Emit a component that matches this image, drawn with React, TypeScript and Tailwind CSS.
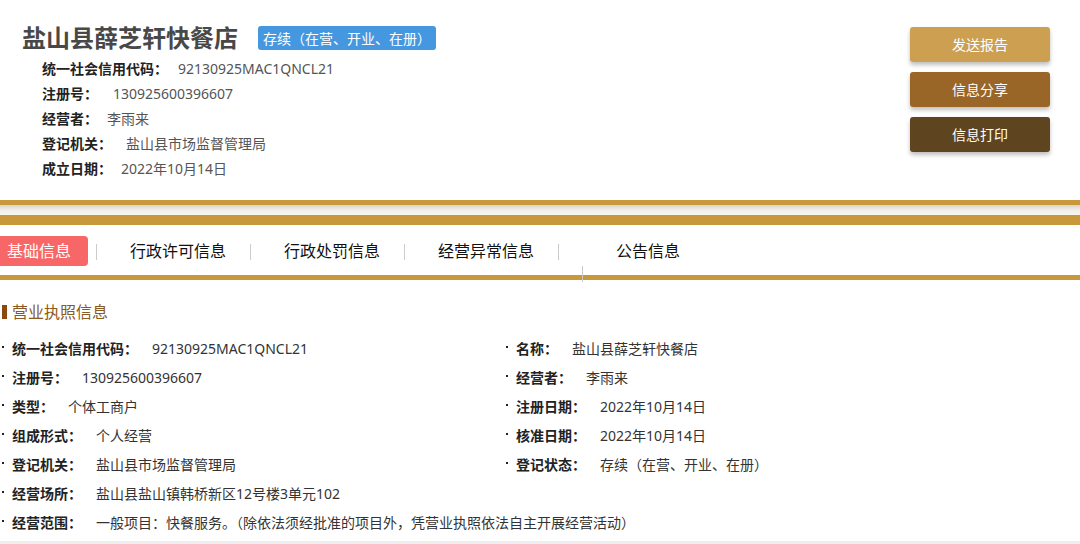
import React from 'react';

const gold = 'bg-[#c9983a]';

const headerInfo: { label: string; value: string; gap: string }[] = [
  { label: '统一社会信用代码：', value: '92130925MAC1QNCL21', gap: 'ml-[10px]' },
  { label: '注册号：', value: '130925600396607', gap: 'ml-[15px]' },
  { label: '经营者：', value: '李雨来', gap: 'ml-[9px]' },
  { label: '登记机关：', value: '盐山县市场监督管理局', gap: 'ml-[14px]' },
  { label: '成立日期：', value: '2022年10月14日', gap: 'ml-[9px]' },
];

type Field = { label: string; value: string };

const rows: { left: Field; right?: Field }[] = [
  { left: { label: '统一社会信用代码：', value: '92130925MAC1QNCL21' }, right: { label: '名称：', value: '盐山县薛芝轩快餐店' } },
  { left: { label: '注册号：', value: '130925600396607' }, right: { label: '经营者：', value: '李雨来' } },
  { left: { label: '类型：', value: '个体工商户' }, right: { label: '注册日期：', value: '2022年10月14日' } },
  { left: { label: '组成形式：', value: '个人经营' }, right: { label: '核准日期：', value: '2022年10月14日' } },
  { left: { label: '登记机关：', value: '盐山县市场监督管理局' }, right: { label: '登记状态：', value: '存续（在营、开业、在册）' } },
  { left: { label: '经营场所：', value: '盐山县盐山镇韩桥新区12号楼3单元102' } },
  { left: { label: '经营范围：', value: '一般项目：快餐服务。（除依法须经批准的项目外，凭营业执照依法自主开展经营活动）' } },
];

const tabs = [
  { name: '行政许可信息', w: 'w-[154px]', pl: 'pl-[33px]' },
  { name: '行政处罚信息', w: 'w-[154px]', pl: 'pl-[33px]' },
  { name: '经营异常信息', w: 'w-[154px]', pl: 'pl-[33px]' },
  { name: '公告信息', w: 'w-[160px]', pl: 'pl-[57px]' },
];

const FieldCell: React.FC<{ field: Field }> = ({ field }) => (
  <div className="flex items-center h-[29px] pl-[2px] whitespace-nowrap">
    <span className="w-[2px] h-[2px] bg-[#222] mb-[4px]" />
    <span className="ml-[8px] font-bold text-[#222]">{field.label}</span>
    <span className="ml-[14px] text-[#333]">{field.value}</span>
  </div>
);

export default function App() {
  return (
    <div className="w-[1080px] h-[544px] overflow-hidden bg-white text-[14px] font-['Noto_Sans','Noto_Sans_CJK_SC',sans-serif]">
      {/* header */}
      <div className="h-[200px] flex justify-between">
        <div className="pl-[22px] pt-[23px]">
          <div className="flex items-center h-[30px]">
            <h1 className="text-[24px] font-bold text-[#484848] leading-none">盐山县薛芝轩快餐店</h1>
            <span className="ml-[20px] h-[24px] px-[5px] flex items-center rounded-[3px] bg-[#4598e0] text-white text-[14px]">
              存续（在营、开业、在册）
            </span>
          </div>
          <div className="mt-[3px] ml-[20px]">
            {headerInfo.map((r) => (
              <div key={r.label} className="h-[25px] flex items-center">
                <span className="font-bold text-[#222]">{r.label}</span>
                <span className={`${r.gap} text-[#555]`}>{r.value}</span>
              </div>
            ))}
          </div>
        </div>
        <div className="pt-[27px] pr-[30px] flex flex-col gap-[10px]">
          <button className="w-[140px] h-[35px] rounded-[3px] bg-[#cc9f51] text-white text-[14px] shadow-[0_3px_4px_rgba(0,0,0,0.25)]">发送报告</button>
          <button className="w-[140px] h-[35px] rounded-[3px] bg-[#9a6628] text-white text-[14px] shadow-[0_3px_4px_rgba(0,0,0,0.25)]">信息分享</button>
          <button className="w-[140px] h-[35px] rounded-[3px] bg-[#5f451f] text-white text-[14px] shadow-[0_3px_4px_rgba(0,0,0,0.25)]">信息打印</button>
        </div>
      </div>

      {/* gold bars */}
      <div className={`h-[5px] ${gold}`} />
      <div className="h-[10px] bg-gradient-to-b from-[#d6d3ca] via-[#f1efe8] to-[#f8f6f1]" />
      <div className={`h-[10px] ${gold}`} />

      {/* tabs */}
      <div className="relative h-[50px] flex items-start text-[16px]">
        <div className="mt-[11px] h-[30px] w-[88px] rounded-r-[4px] bg-[#f76767] text-white flex items-center pl-[7px]">基础信息</div>
        <div className="ml-[8px] flex">
          {tabs.map((t) => (
            <div key={t.name} className={`${t.w} flex items-start`}>
              <span className="mt-[19px] w-[1px] h-[16px] bg-[#cccccc]" />
              <span className={`${t.pl} mt-[14px] text-[#111] leading-[24px]`}>{t.name}</span>
            </div>
          ))}
        </div>
        <span className="absolute left-[582px] top-[41px] w-[1px] h-[16px] bg-[#c8c8c8]" />
      </div>
      <div className={`h-[5px] ${gold}`} />

      {/* section */}
      <div className="mt-[22px] h-[20px] flex items-center">
        <span className="ml-[2px] w-[5px] h-[14px] bg-[#8b4a0f]" />
        <span className="ml-[5px] text-[16px] text-[#8a5a22]">营业执照信息</span>
      </div>

      <div className="mt-[12px] grid grid-cols-[504px_1fr]">
        {rows.map((r, i) =>
          r.right ? (
            <React.Fragment key={i}>
              <FieldCell field={r.left} />
              <FieldCell field={r.right} />
            </React.Fragment>
          ) : (
            <div key={i} className="col-span-2">
              <FieldCell field={r.left} />
            </div>
          )
        )}
      </div>
      <div className="mt-[4px] h-[10px] bg-[#eeeeee]" />
    </div>
  );
}
